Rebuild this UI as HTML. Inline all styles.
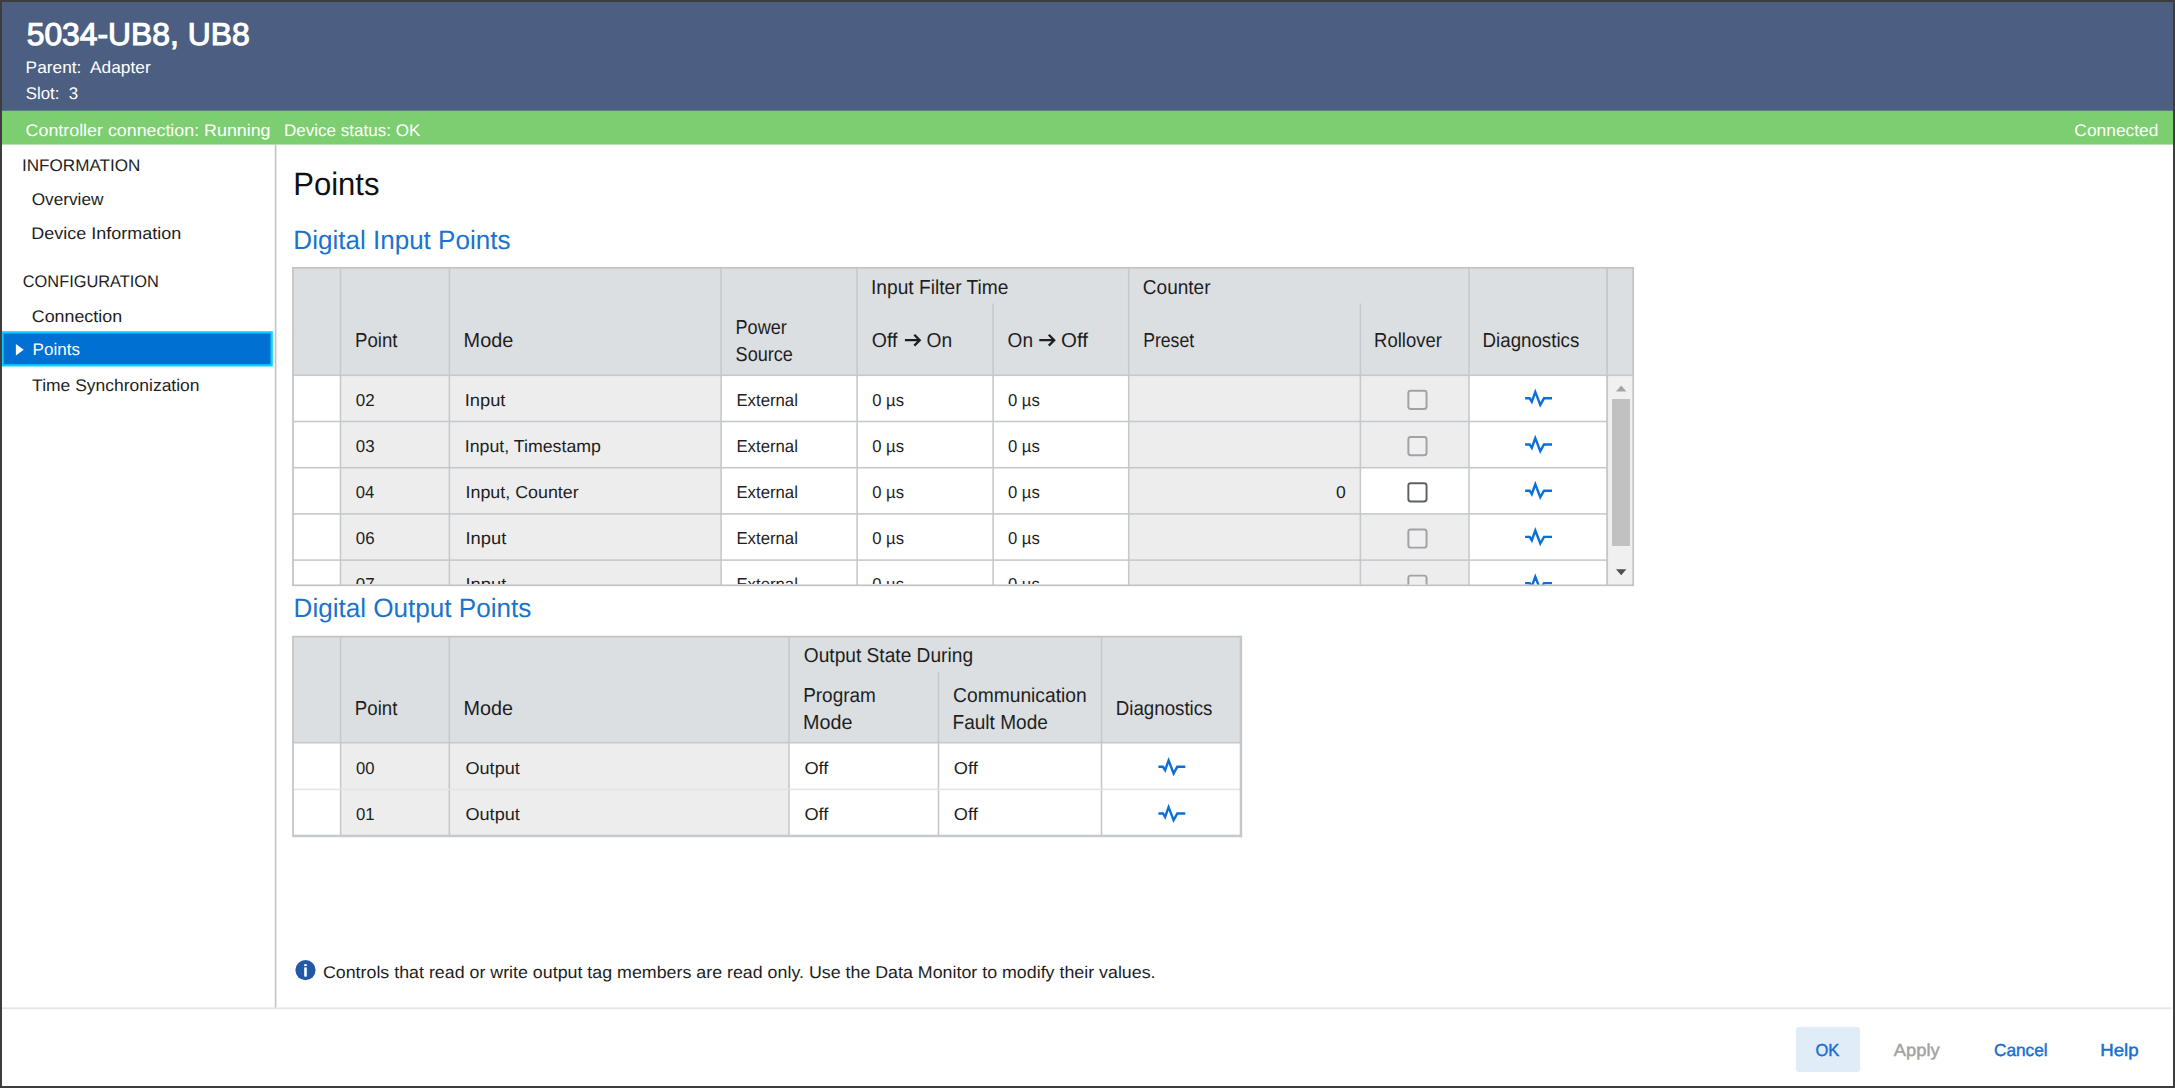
<!DOCTYPE html>
<html><head><meta charset="utf-8"><title>5034-UB8</title>
<style>
html,body{margin:0;padding:0}
body{width:2175px;height:1088px;background:#3d3d3d;position:relative;overflow:hidden;font-family:"Liberation Sans",sans-serif}
div,svg,span.t{position:absolute}
span.t{white-space:pre;transform-origin:0 0;display:block;text-rendering:geometricPrecision}
#clip{left:293.00px;top:267.80px;width:1340.20px;height:316.70px;overflow:hidden}
</style></head><body>
<div style="left:2.00px;top:2.00px;width:2171.00px;height:1084.00px;background:#ffffff;"></div>
<svg style="left:0;top:0" width="2175" height="150"><rect x="2" y="2" width="2171" height="109" fill="#4c5f82"/><rect x="2" y="110.7" width="2171" height="33.85" fill="#7dce70"/></svg>
<svg style="left:0;top:0" width="300" height="400"><rect x="2" y="331.2" width="270.8" height="35.3" fill="#0bd0ff"/><rect x="3.6" y="333.5" width="266.9" height="30.7" fill="#0070d2"/></svg>
<svg style="left:0;top:0" width="300" height="400"><path d="M15.9,344.1 L23.7,349.85 L15.9,355.6 Z" fill="#fff"/></svg>
<div style="left:293.00px;top:267.80px;width:1340.20px;height:317.50px;background:#ffffff;"></div>
<div style="left:293.00px;top:267.80px;width:1340.20px;height:107.50px;background:#dcdfe2;"></div>
<div style="left:340.50px;top:375.30px;width:380.60px;height:210.00px;background:#ededed;"></div>
<div style="left:1128.70px;top:375.30px;width:340.30px;height:210.00px;background:#ededed;"></div>
<div style="left:1360.40px;top:467.70px;width:108.60px;height:46.20px;background:#ffffff;"></div>
<div style="left:1607.10px;top:375.30px;width:26.10px;height:210.00px;background:#f0f0f0;"></div>
<div style="left:1612.20px;top:398.80px;width:18.00px;height:147.60px;background:#c1c1c1;"></div>
<div style="left:293.00px;top:636.60px;width:948.30px;height:199.00px;background:#ffffff;"></div>
<div style="left:293.00px;top:636.60px;width:948.30px;height:106.10px;background:#dcdfe2;"></div>
<div style="left:340.60px;top:742.70px;width:448.40px;height:92.90px;background:#ededed;"></div>
<div style="left:1796.00px;top:1027.00px;width:64.00px;height:45.00px;background:#e1ecf9;border-radius:3px;"></div>
<svg style="left:0;top:0" width="2175" height="1088">
<rect x="274.75" y="144.40" width="1.70" height="863.60" fill="#c3c4cc"/>
<rect x="2.00" y="1007.40" width="2169.50" height="1.80" fill="#e3e6eb"/>
<rect x="339.73" y="267.80" width="1.55" height="317.50" fill="#c5c8cc"/>
<rect x="448.62" y="267.80" width="1.55" height="317.50" fill="#c5c8cc"/>
<rect x="720.33" y="267.80" width="1.55" height="317.50" fill="#c5c8cc"/>
<rect x="856.33" y="267.80" width="1.55" height="317.50" fill="#c5c8cc"/>
<rect x="992.33" y="303.50" width="1.55" height="281.80" fill="#c5c8cc"/>
<rect x="1127.92" y="267.80" width="1.55" height="317.50" fill="#c5c8cc"/>
<rect x="1359.62" y="303.50" width="1.55" height="281.80" fill="#c5c8cc"/>
<rect x="1468.22" y="267.80" width="1.55" height="317.50" fill="#c5c8cc"/>
<rect x="1606.15" y="267.80" width="1.90" height="317.50" fill="#c5c8cc"/>
<rect x="293.00" y="374.53" width="1340.20" height="1.55" fill="#c5c8cc"/>
<rect x="293.00" y="420.73" width="1314.10" height="1.55" fill="#c5c8cc"/>
<rect x="293.00" y="466.93" width="1314.10" height="1.55" fill="#c5c8cc"/>
<rect x="293.00" y="513.13" width="1314.10" height="1.55" fill="#c5c8cc"/>
<rect x="293.00" y="559.33" width="1314.10" height="1.55" fill="#c5c8cc"/>
<rect x="293.00" y="267.80" width="1340.20" height="317.50" fill="none" stroke="#c0c3c7" stroke-width="1.70"/>
<rect x="339.83" y="636.60" width="1.55" height="199.00" fill="#c5c8cc"/>
<rect x="448.53" y="636.60" width="1.55" height="199.00" fill="#c5c8cc"/>
<rect x="788.23" y="636.60" width="1.55" height="199.00" fill="#c5c8cc"/>
<rect x="937.73" y="672.00" width="1.55" height="163.60" fill="#c5c8cc"/>
<rect x="1100.72" y="636.60" width="1.55" height="199.00" fill="#c5c8cc"/>
<rect x="293.00" y="741.93" width="948.30" height="1.55" fill="#c5c8cc"/>
<rect x="293.00" y="788.65" width="948.30" height="1.50" fill="#e3e4e6"/>
<rect x="293.00" y="636.60" width="948.30" height="199.00" fill="none" stroke="#c0c3c7" stroke-width="1.70"/>
<rect x="292.20" y="834.95" width="950.00" height="2.30" fill="#c6c9cd"/>
<rect x="1239.70" y="635.80" width="2.10" height="201.40" fill="#c3c6ca"/>
<path d="M1616,391.4 L1621.2,385.6 L1626.4,391.4 Z" fill="#a3a3a3"/>
<path d="M1616,569.2 L1626.4,569.2 L1621.2,575.2 Z" fill="#505050"/>
<clipPath id="ct"><rect x="293.0" y="267.8" width="1340.2" height="316.7"/></clipPath><g clip-path="url(#ct)">
<rect x="1408.35" y="390.80" width="18.2" height="18.2" rx="2.4" fill="#efefef" stroke="#a0a2a6" stroke-width="1.95"/>
<path d="M1525.10,398.30 L1529.70,398.30 L1531.80,401.80 L1535.30,391.90 L1540.30,404.90 L1544.00,398.30 L1552.00,398.30" fill="none" stroke="#0a6fd8" stroke-width="2.4" stroke-linejoin="miter" stroke-miterlimit="10"/>
<rect x="1408.35" y="437.00" width="18.2" height="18.2" rx="2.4" fill="#efefef" stroke="#a0a2a6" stroke-width="1.95"/>
<path d="M1525.10,444.50 L1529.70,444.50 L1531.80,448.00 L1535.30,438.10 L1540.30,451.10 L1544.00,444.50 L1552.00,444.50" fill="none" stroke="#0a6fd8" stroke-width="2.4" stroke-linejoin="miter" stroke-miterlimit="10"/>
<rect x="1408.35" y="483.20" width="18.2" height="18.2" rx="2.4" fill="#ffffff" stroke="#5c6064" stroke-width="1.95"/>
<path d="M1525.10,490.70 L1529.70,490.70 L1531.80,494.20 L1535.30,484.30 L1540.30,497.30 L1544.00,490.70 L1552.00,490.70" fill="none" stroke="#0a6fd8" stroke-width="2.4" stroke-linejoin="miter" stroke-miterlimit="10"/>
<rect x="1408.35" y="529.40" width="18.2" height="18.2" rx="2.4" fill="#efefef" stroke="#a0a2a6" stroke-width="1.95"/>
<path d="M1525.10,536.90 L1529.70,536.90 L1531.80,540.40 L1535.30,530.50 L1540.30,543.50 L1544.00,536.90 L1552.00,536.90" fill="none" stroke="#0a6fd8" stroke-width="2.4" stroke-linejoin="miter" stroke-miterlimit="10"/>
<rect x="1408.35" y="575.60" width="18.2" height="18.2" rx="2.4" fill="#efefef" stroke="#a0a2a6" stroke-width="1.95"/>
<path d="M1525.10,583.10 L1529.70,583.10 L1531.80,586.60 L1535.30,576.70 L1540.30,589.70 L1544.00,583.10 L1552.00,583.10" fill="none" stroke="#0a6fd8" stroke-width="2.4" stroke-linejoin="miter" stroke-miterlimit="10"/>
</g>
<path d="M1158.40,766.80 L1163.00,766.80 L1165.10,770.30 L1168.60,760.40 L1173.60,773.40 L1177.30,766.80 L1185.30,766.80" fill="none" stroke="#0a6fd8" stroke-width="2.4" stroke-linejoin="miter" stroke-miterlimit="10"/>
<path d="M1158.40,813.50 L1163.00,813.50 L1165.10,817.00 L1168.60,807.10 L1173.60,820.10 L1177.30,813.50 L1185.30,813.50" fill="none" stroke="#0a6fd8" stroke-width="2.4" stroke-linejoin="miter" stroke-miterlimit="10"/>
<circle cx="305.5" cy="970.1" r="10.1" fill="#2158a8"/>
<rect x="304.2" y="967.4" width="2.6" height="9.2" fill="#fff"/><rect x="304.2" y="964.2" width="2.6" height="1.9" fill="#fff"/>
<path d="M904.90,340.20 H919.50 M914.30,334.80 L919.70,340.20 L914.30,345.60" fill="none" stroke="#1e1e1e" stroke-width="2.3" stroke-linejoin="miter"/>
<path d="M1039.30,340.20 H1054.00 M1048.80,334.80 L1054.20,340.20 L1048.80,345.60" fill="none" stroke="#1e1e1e" stroke-width="2.3" stroke-linejoin="miter"/>
</svg>
<span class="t" style="left:26px;top:16px;font-size:31.60px;line-height:36px;color:#ffffff;-webkit-text-stroke:1.1px #fff;transform:translateX(0.73px) scaleX(1.0071)">5034-UB8, UB8</span>
<span class="t" style="left:25px;top:58px;font-size:16.90px;line-height:19px;color:#ffffff;transform:translateX(0.58px) scaleX(1.0248)">Parent:  Adapter</span>
<span class="t" style="left:25px;top:84px;font-size:16.90px;line-height:19px;color:#ffffff;transform:translateX(0.74px) scaleX(0.9967)">Slot:  3</span>
<span class="t" style="left:25px;top:121px;font-size:16.90px;line-height:19px;color:#ffffff;transform:translateX(0.59px) scaleX(1.0562)">Controller connection: Running</span>
<span class="t" style="left:283px;top:121px;font-size:16.90px;line-height:19px;color:#ffffff;transform:translateX(0.90px) scaleX(1.0089)">Device status: OK</span>
<span class="t" style="left:2074px;top:121px;font-size:16.90px;line-height:19px;color:#ffffff;transform:translateX(0.32px) scaleX(1.0294)">Connected</span>
<span class="t" style="left:22px;top:156px;font-size:16.90px;line-height:19px;color:#1e1e1e;transform:translateX(0.02px) scaleX(1.0119)">INFORMATION</span>
<span class="t" style="left:31px;top:190px;font-size:16.90px;line-height:19px;color:#1e1e1e;transform:translateX(0.68px) scaleX(1.0194)">Overview</span>
<span class="t" style="left:31px;top:224px;font-size:16.90px;line-height:19px;color:#1e1e1e;transform:translateX(0.32px) scaleX(1.0640)">Device Information</span>
<span class="t" style="left:22px;top:272px;font-size:16.90px;line-height:19px;color:#1e1e1e;transform:translateX(0.77px) scaleX(0.9696)">CONFIGURATION</span>
<span class="t" style="left:31px;top:307px;font-size:16.90px;line-height:19px;color:#1e1e1e;transform:translateX(0.79px) scaleX(1.0563)">Connection</span>
<span class="t" style="left:32px;top:340px;font-size:16.90px;line-height:19px;color:#ffffff;transform:translateX(0.60px) scaleX(1.0099)">Points</span>
<span class="t" style="left:32px;top:376px;font-size:16.90px;line-height:19px;color:#1e1e1e;transform:translateX(0.11px) scaleX(1.0349)">Time Synchronization</span>
<span class="t" style="left:293px;top:166px;font-size:32.30px;line-height:36px;color:#111111;transform:translateX(0.25px) scaleX(0.9610)">Points</span>
<span class="t" style="left:293px;top:225px;font-size:26.50px;line-height:30px;color:#1b74cb;transform:translateX(0.36px) scaleX(0.9824)">Digital Input Points</span>
<span class="t" style="left:293px;top:593px;font-size:26.50px;line-height:30px;color:#1b74cb;transform:translateX(0.56px) scaleX(0.9843)">Digital Output Points</span>
<span class="t" style="left:354px;top:330px;font-size:20.20px;line-height:22px;color:#1e1e1e;transform:translateX(0.97px) scaleX(0.9229)">Point</span>
<span class="t" style="left:463px;top:330px;font-size:20.20px;line-height:22px;color:#1e1e1e;transform:translateX(0.57px) scaleX(0.9845)">Mode</span>
<span class="t" style="left:735px;top:317px;font-size:20.20px;line-height:22px;color:#1e1e1e;transform:translateX(0.51px) scaleX(0.8979)">Power</span>
<span class="t" style="left:735px;top:344px;font-size:20.20px;line-height:22px;color:#1e1e1e;transform:translateX(0.58px) scaleX(0.8962)">Source</span>
<span class="t" style="left:871px;top:277px;font-size:20.20px;line-height:22px;color:#1e1e1e;transform:translateX(0.03px) scaleX(0.9495)">Input Filter Time</span>
<span class="t" style="left:871px;top:330px;font-size:20.20px;line-height:22px;color:#1e1e1e;transform:translateX(0.77px) scaleX(0.9674)">Off</span>
<span class="t" style="left:926px;top:330px;font-size:20.20px;line-height:22px;color:#1e1e1e;transform:translateX(0.59px) scaleX(0.9526)">On</span>
<span class="t" style="left:1007px;top:330px;font-size:20.20px;line-height:22px;color:#1e1e1e;transform:translateX(0.60px) scaleX(0.9445)">On</span>
<span class="t" style="left:1061px;top:330px;font-size:20.20px;line-height:22px;color:#1e1e1e;transform:translateX(0.03px) scaleX(1.0142)">Off</span>
<span class="t" style="left:1142px;top:277px;font-size:20.20px;line-height:22px;color:#1e1e1e;transform:translateX(0.83px) scaleX(0.9423)">Counter</span>
<span class="t" style="left:1143px;top:330px;font-size:20.20px;line-height:22px;color:#1e1e1e;transform:translateX(0.15px) scaleX(0.8735)">Preset</span>
<span class="t" style="left:1374px;top:330px;font-size:20.20px;line-height:22px;color:#1e1e1e;transform:translateX(0.08px) scaleX(0.9144)">Rollover</span>
<span class="t" style="left:1482px;top:330px;font-size:20.20px;line-height:22px;color:#1e1e1e;transform:translateX(0.56px) scaleX(0.9267)">Diagnostics</span>
<span class="t" style="left:354px;top:698px;font-size:20.20px;line-height:22px;color:#1e1e1e;transform:translateX(0.87px) scaleX(0.9251)">Point</span>
<span class="t" style="left:463px;top:698px;font-size:20.20px;line-height:22px;color:#1e1e1e;transform:translateX(0.58px) scaleX(0.9803)">Mode</span>
<span class="t" style="left:803px;top:645px;font-size:20.20px;line-height:22px;color:#1e1e1e;transform:translateX(0.79px) scaleX(0.9485)">Output State During</span>
<span class="t" style="left:803px;top:685px;font-size:20.20px;line-height:22px;color:#1e1e1e;transform:translateX(0.14px) scaleX(0.9391)">Program</span>
<span class="t" style="left:803px;top:712px;font-size:20.20px;line-height:22px;color:#1e1e1e;transform:translateX(0.08px) scaleX(0.9782)">Mode</span>
<span class="t" style="left:953px;top:685px;font-size:20.20px;line-height:22px;color:#1e1e1e;transform:translateX(0.12px) scaleX(0.9521)">Communication</span>
<span class="t" style="left:952px;top:712px;font-size:20.20px;line-height:22px;color:#1e1e1e;transform:translateX(0.54px) scaleX(0.9437)">Fault Mode</span>
<span class="t" style="left:1115px;top:698px;font-size:20.20px;line-height:22px;color:#1e1e1e;transform:translateX(0.76px) scaleX(0.9267)">Diagnostics</span>
<span class="t" style="left:355px;top:758px;font-size:17.30px;line-height:20px;color:#1e1e1e;transform:translateX(0.95px) scaleX(0.9618)">00</span>
<span class="t" style="left:465px;top:758px;font-size:17.30px;line-height:20px;color:#1e1e1e;transform:translateX(0.44px) scaleX(1.0482)">Output</span>
<span class="t" style="left:804px;top:758px;font-size:17.30px;line-height:20px;color:#1e1e1e;transform:translateX(0.44px) scaleX(1.0529)">Off</span>
<span class="t" style="left:953px;top:758px;font-size:17.30px;line-height:20px;color:#1e1e1e;transform:translateX(0.84px) scaleX(1.0529)">Off</span>
<span class="t" style="left:355px;top:804px;font-size:17.30px;line-height:20px;color:#1e1e1e;transform:translateX(0.94px) scaleX(0.9710)">01</span>
<span class="t" style="left:465px;top:804px;font-size:17.30px;line-height:20px;color:#1e1e1e;transform:translateX(0.44px) scaleX(1.0482)">Output</span>
<span class="t" style="left:804px;top:804px;font-size:17.30px;line-height:20px;color:#1e1e1e;transform:translateX(0.44px) scaleX(1.0529)">Off</span>
<span class="t" style="left:953px;top:804px;font-size:17.30px;line-height:20px;color:#1e1e1e;transform:translateX(0.84px) scaleX(1.0529)">Off</span>
<span class="t" style="left:322px;top:963px;font-size:17.00px;line-height:19px;color:#1e1e1e;transform:translateX(0.90px) scaleX(1.0482)">Controls that read or write output tag members are read only. Use the Data Monitor to modify their values.</span>
<span class="t" style="left:1815px;top:1040px;font-size:17.40px;line-height:20px;color:#1a6fd0;-webkit-text-stroke:0.45px currentColor;transform:translateX(0.42px) scaleX(0.9494)">OK</span>
<span class="t" style="left:1893px;top:1040px;font-size:17.40px;line-height:20px;color:#a2a2a2;-webkit-text-stroke:0.45px currentColor;transform:translateX(0.86px) scaleX(1.0541)">Apply</span>
<span class="t" style="left:1993px;top:1040px;font-size:17.40px;line-height:20px;color:#1a6fd0;-webkit-text-stroke:0.45px currentColor;transform:translateX(0.92px) scaleX(0.9925)">Cancel</span>
<span class="t" style="left:2100px;top:1040px;font-size:17.40px;line-height:20px;color:#1a6fd0;-webkit-text-stroke:0.45px currentColor;transform:translateX(0.17px) scaleX(1.0737)">Help</span>
<div id="clip">
<span class="t" style="left:62px;top:122px;font-size:17.30px;line-height:20px;color:#1e1e1e;transform:translateX(0.74px) scaleX(0.9837)">02</span>
<span class="t" style="left:171px;top:122px;font-size:17.30px;line-height:20px;color:#1e1e1e;transform:translateX(0.71px) scaleX(1.0595)">Input</span>
<span class="t" style="left:443px;top:122px;font-size:17.30px;line-height:20px;color:#1e1e1e;transform:translateX(0.42px) scaleX(0.9699)">External</span>
<span class="t" style="left:579px;top:122px;font-size:17.30px;line-height:20px;color:#1e1e1e;transform:translateX(0.25px) scaleX(0.9617)">0 µs</span>
<span class="t" style="left:714px;top:122px;font-size:17.30px;line-height:20px;color:#1e1e1e;transform:translateX(0.95px) scaleX(0.9649)">0 µs</span>
<span class="t" style="left:62px;top:168px;font-size:17.30px;line-height:20px;color:#1e1e1e;transform:translateX(0.74px) scaleX(0.9776)">03</span>
<span class="t" style="left:171px;top:168px;font-size:17.30px;line-height:20px;color:#1e1e1e;transform:translateX(0.76px) scaleX(1.0275)">Input, Timestamp</span>
<span class="t" style="left:443px;top:168px;font-size:17.30px;line-height:20px;color:#1e1e1e;transform:translateX(0.42px) scaleX(0.9699)">External</span>
<span class="t" style="left:579px;top:168px;font-size:17.30px;line-height:20px;color:#1e1e1e;transform:translateX(0.25px) scaleX(0.9617)">0 µs</span>
<span class="t" style="left:714px;top:168px;font-size:17.30px;line-height:20px;color:#1e1e1e;transform:translateX(0.95px) scaleX(0.9649)">0 µs</span>
<span class="t" style="left:62px;top:214px;font-size:17.30px;line-height:20px;color:#1e1e1e;transform:translateX(0.75px) scaleX(0.9639)">04</span>
<span class="t" style="left:172px;top:214px;font-size:17.30px;line-height:20px;color:#1e1e1e;transform:translateX(0.55px) scaleX(1.0330)">Input, Counter</span>
<span class="t" style="left:443px;top:214px;font-size:17.30px;line-height:20px;color:#1e1e1e;transform:translateX(0.42px) scaleX(0.9699)">External</span>
<span class="t" style="left:579px;top:214px;font-size:17.30px;line-height:20px;color:#1e1e1e;transform:translateX(0.25px) scaleX(0.9617)">0 µs</span>
<span class="t" style="left:714px;top:214px;font-size:17.30px;line-height:20px;color:#1e1e1e;transform:translateX(0.95px) scaleX(0.9649)">0 µs</span>
<span class="t" style="left:62px;top:260px;font-size:17.30px;line-height:20px;color:#1e1e1e;transform:translateX(0.74px) scaleX(0.9776)">06</span>
<span class="t" style="left:172px;top:260px;font-size:17.30px;line-height:20px;color:#1e1e1e;transform:translateX(0.51px) scaleX(1.0595)">Input</span>
<span class="t" style="left:443px;top:260px;font-size:17.30px;line-height:20px;color:#1e1e1e;transform:translateX(0.42px) scaleX(0.9699)">External</span>
<span class="t" style="left:579px;top:260px;font-size:17.30px;line-height:20px;color:#1e1e1e;transform:translateX(0.25px) scaleX(0.9617)">0 µs</span>
<span class="t" style="left:714px;top:260px;font-size:17.30px;line-height:20px;color:#1e1e1e;transform:translateX(0.95px) scaleX(0.9649)">0 µs</span>
<span class="t" style="left:62px;top:306px;font-size:17.30px;line-height:20px;color:#1e1e1e;transform:translateX(0.74px) scaleX(0.9837)">07</span>
<span class="t" style="left:172px;top:306px;font-size:17.30px;line-height:20px;color:#1e1e1e;transform:translateX(0.51px) scaleX(1.0595)">Input</span>
<span class="t" style="left:443px;top:306px;font-size:17.30px;line-height:20px;color:#1e1e1e;transform:translateX(0.42px) scaleX(0.9699)">External</span>
<span class="t" style="left:579px;top:306px;font-size:17.30px;line-height:20px;color:#1e1e1e;transform:translateX(0.25px) scaleX(0.9617)">0 µs</span>
<span class="t" style="left:714px;top:306px;font-size:17.30px;line-height:20px;color:#1e1e1e;transform:translateX(0.95px) scaleX(0.9649)">0 µs</span>
<span class="t" style="left:1043px;top:214px;font-size:17.30px;line-height:20px;color:#1e1e1e;transform:translateX(0.11px) scaleX(1.0153)">0</span>
</div>
</body></html>
